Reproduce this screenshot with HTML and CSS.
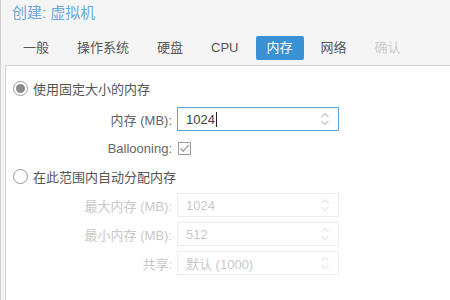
FILE: index.html
```html
<!DOCTYPE html>
<html>
<head>
<meta charset="utf-8">
<link rel="stylesheet" href="styles.css">
</head>
<body>
<div class="window">
  <div class="header">
    <div class="title">创建: 虚拟机</div>
    <div class="tabs">
      <span class="tab">一般</span>
      <span class="tab">操作系统</span>
      <span class="tab">硬盘</span>
      <span class="tab">CPU</span>
      <span class="tab active">内存</span>
      <span class="tab">网络</span>
      <span class="tab disabled">确认</span>
    </div>
  </div>
  <div class="panel">
    <div class="radio-row">
      <span class="radio checked"></span>
      <span class="radio-label">使用固定大小的内存</span>
    </div>
    <div class="field">
      <label class="field-label">内存 (MB):</label>
      <div class="input focus"><span class="val">1024<span class="caret"></span></span><span class="spin"><svg width="10" height="14" viewBox="0 0 10 14"><path d="M1.5 5 L5 1.5 L8.5 5 M1.5 9 L5 12.5 L8.5 9" fill="none" stroke="#9a9a9a" stroke-width="1"/></svg></span></div>
    </div>
    <div class="field check-field">
      <label class="field-label">Ballooning:</label>
      <span class="checkbox"><svg width="13" height="13" viewBox="0 0 13 13"><rect x="0.5" y="0.5" width="12" height="12" fill="#fff" stroke="#9a9a9a"/><path d="M2.5 6.5 L5.2 9.3 L10.5 3.2" fill="none" stroke="#888" stroke-width="1.1"/></svg></span>
    </div>
    <div class="radio-row second">
      <span class="radio"></span>
      <span class="radio-label">在此范围内自动分配内存</span>
    </div>
    <div class="field disabled">
      <label class="field-label">最大内存 (MB):</label>
      <div class="input"><span class="val">1024</span><span class="spin"><svg width="10" height="14" viewBox="0 0 10 14"><path d="M1.5 5 L5 1.5 L8.5 5 M1.5 9 L5 12.5 L8.5 9" fill="none" stroke="#9a9a9a" stroke-width="1"/></svg></span></div>
    </div>
    <div class="field disabled">
      <label class="field-label">最小内存 (MB):</label>
      <div class="input"><span class="val">512</span><span class="spin"><svg width="10" height="14" viewBox="0 0 10 14"><path d="M1.5 5 L5 1.5 L8.5 5 M1.5 9 L5 12.5 L8.5 9" fill="none" stroke="#9a9a9a" stroke-width="1"/></svg></span></div>
    </div>
    <div class="field disabled">
      <label class="field-label">共享:</label>
      <div class="input"><span class="val">默认 (1000)</span><span class="spin"><svg width="10" height="14" viewBox="0 0 10 14"><path d="M1.5 5 L5 1.5 L8.5 5 M1.5 9 L5 12.5 L8.5 9" fill="none" stroke="#9a9a9a" stroke-width="1"/></svg></span></div>
    </div>
  </div>
</div>
</body>
</html>
```
FILE: styles.css
```css
* { box-sizing: border-box; }
html, body { margin: 0; padding: 0; }
body {
  width: 450px;
  height: 300px;
  overflow: hidden;
  font-family: "Liberation Sans", "Noto Sans CJK SC", sans-serif;
  font-size: 13px;
  color: #555;
  background: #f5f5f5;
}
.window {
  height: 300px;
  border-left: 1px solid #d0d0d0;
  background: #f5f5f5;
  display: flex;
  flex-direction: column;
}
.header {
  padding: 0 0 0 11px;
}
.title {
  color: #3892d4;
  font-size: 15px;
  height: 30px;
  line-height: 25px;
  opacity: 0.75;
}
.tabs {
  display: flex;
  align-items: center;
  height: 35px;
}
.tab {
  padding: 4px 11px;
  margin-right: 6px;
  border-radius: 2px;
  line-height: 16px;
  color: #555;
}
.tab.active {
  background: #3892d4;
  color: #fff;
}
.tab.disabled { color: #cdcdcd; }
.panel {
  flex: 1;
  margin-left: 4px;
  background: #fff;
  border-top: 1px solid #d0d0d0;
  border-left: 1px solid #d0d0d0;
  padding: 14px 0 0 7px;
}
.radio-row {
  display: flex;
  align-items: center;
  height: 16px;
  gap: 5px;
  color: #555;
}
.radio-row.second { margin-top: 10px; }
.radio {
  width: 15px;
  height: 15px;
  border: 1px solid #999;
  border-radius: 50%;
  display: flex;
  align-items: center;
  justify-content: center;
}
.radio.checked::after {
  content: "";
  width: 9px;
  height: 9px;
  border-radius: 50%;
  background: #8a8a8a;
}
.field {
  display: flex;
  align-items: center;
  margin-top: 5px;
  height: 24px;
}
.radio-row + .field { margin-top: 11px; }
.radio-row.second + .field { margin-top: 9px; }
.field-label {
  width: 164px;
  text-align: right;
  padding-right: 5px;
  color: #666;
}
.input {
  width: 162px;
  height: 24px;
  border: 1px solid #cfcfcf;
  display: flex;
  align-items: center;
  justify-content: space-between;
  padding: 0 8px 0 8px;
  background: #fff;
}
.input.focus { border-color: #5fa2dd; }
.val { color: #404040; display: flex; align-items: center; }
.caret {
  display: inline-block;
  width: 1px;
  height: 15px;
  background: #222;
  margin-left: 1px;
}
.spin { display: flex; }
.check-field { margin-top: 7px; height: 20px; }
.check-field .field-label { color: #666; }
.checkbox { display: flex; margin-left: 1px; }
.disabled .field-label, .disabled .val { color: #c8c8c8; }
.disabled .input { border-color: #ececec; }
.disabled .spin svg path { stroke: #d6d6d6; }
```
